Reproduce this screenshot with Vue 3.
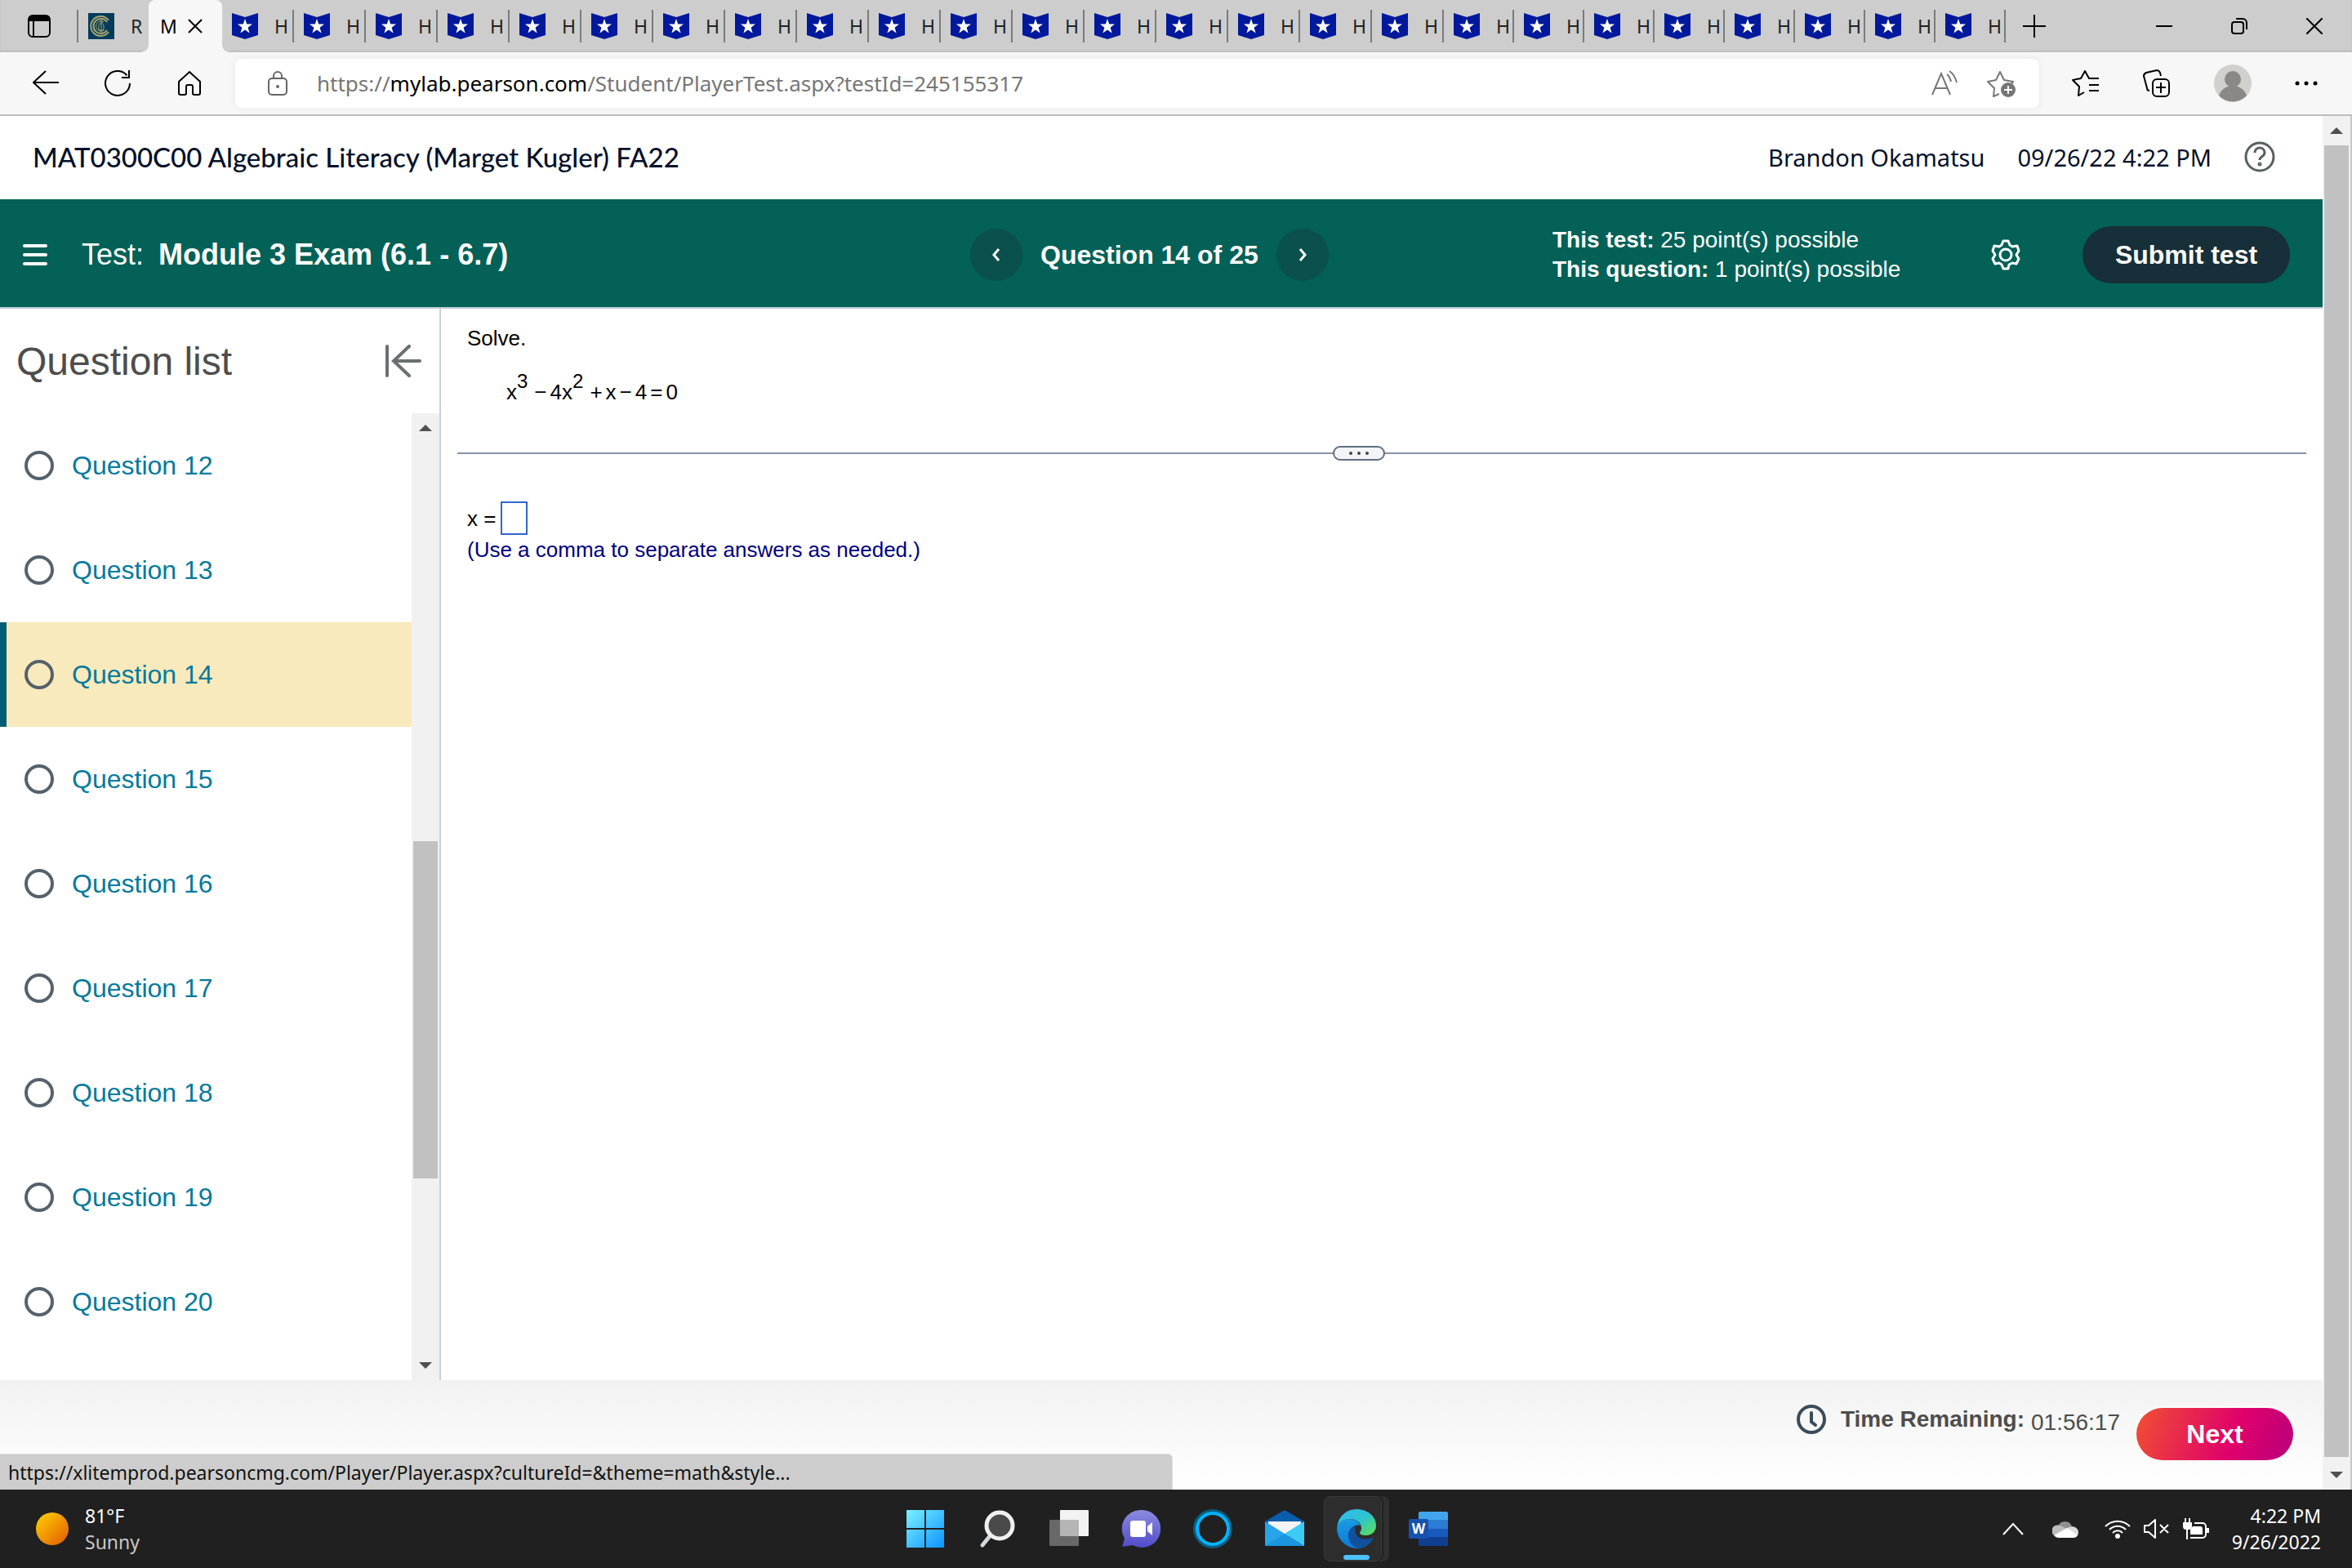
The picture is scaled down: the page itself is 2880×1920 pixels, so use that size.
<script setup>
import { ref } from "vue";

// 25 homework tabs, the last ones are squeezed a little by the browser
const homeworkTabs = Array.from({ length: 25 }, (_, i) => ({ id: i, narrow: i > 16 }));
const questions = [12, 13, 14, 15, 16, 17, 18, 19, 20];
const current = ref(14);
const answer = ref("");
const select = (n) => {
  current.value = n;
};
</script>

<template>
  <div class="screen">
    <!-- tab strip -->
    <div class="tabs">
      <button class="tab-menu" aria-label="Tab actions">
        <svg width="28" height="28" viewBox="0 0 28 28">
          <rect x="1" y="1" width="26" height="26" rx="5" fill="none" stroke="#000" stroke-width="2" />
          <path d="M1 8V5a4 4 0 0 1 4-4h18a4 4 0 0 1 4 4v3z" />
          <path d="M7 8v19" stroke="#000" stroke-width="2" />
        </svg>
      </button>
      <button class="tab tab-first">
        <svg width="32" height="32" viewBox="0 0 32 32">
          <rect width="32" height="32" fill="#003b5c" />
          <g fill="none" stroke="#a9a46a">
            <path d="M25 9a12 12 0 1 0 0 14" stroke-width="2" />
            <path d="M23 11a9 9 0 1 0 0 10" stroke-width="2" />
            <path d="M19 11a6 6 0 1 0 0 10M16 8v16M13 21v-6l3-4 3 4v6z" stroke-width="1" />
          </g>
        </svg>
        <span>R</span>
      </button>
      <div class="tab-active">
        <span>M</span>
        <button aria-label="Close tab">
          <svg width="18" height="18" viewBox="0 0 18 18">
            <path d="M1 1l16 16M17 1L1 17" stroke="#000" stroke-width="2" />
          </svg>
        </button>
      </div>
      <button v-for="t in homeworkTabs" :key="t.id" class="tab" :class="{ narrow: t.narrow }">
        <svg width="32" height="32" viewBox="0 0 32 32">
          <path d="M0 0l16 5L32 0v27l-16 5-16-5z" fill="#00189b" />
          <path d="M16 7l2.200 6.500h6.800l-5.400 4.200 2 6.800-5.600-4-5.600 4 2-6.800L7 13.500h6.800z" fill="#fff" />
        </svg>
        <span>H</span>
      </button>
      <button class="new-tab" aria-label="New tab">
        <svg width="28" height="28" viewBox="0 0 28 28">
          <path d="M14 0v28M0 14h28" stroke="#000" stroke-width="2" />
        </svg>
      </button>
      <div class="window-buttons">
        <button aria-label="Minimize">
          <svg width="20" height="20" viewBox="0 0 20 20"><path d="M0 10h20" stroke="#000" stroke-width="2" /></svg>
        </button>
        <button aria-label="Restore">
          <svg width="20" height="20" viewBox="0 0 20 20" fill="none" stroke="#000" stroke-width="2">
            <rect x="1" y="5" width="14" height="14" rx="3" />
            <path d="M6 1h8a5 5 0 0 1 5 5v8" />
          </svg>
        </button>
        <button aria-label="Close">
          <svg width="20" height="20" viewBox="0 0 20 20"><path d="M0 0l20 20M20 0L0 20" stroke="#000" stroke-width="2" /></svg>
        </button>
      </div>
    </div>

    <!-- address bar -->
    <div class="toolbar">
      <div class="nav-buttons">
        <button aria-label="Back">
          <svg width="32" height="32" viewBox="0 0 32 32" fill="none" stroke="#000" stroke-width="2">
            <path d="M32 15H1M16 1L1 15l15 14" />
          </svg>
        </button>
        <button aria-label="Refresh">
          <svg width="32" height="32" viewBox="0 0 32 32" fill="none" stroke="#000" stroke-width="2">
            <path d="M31 16a15 15 0 1 1-3.500-9.700M30 0v9h-9" />
          </svg>
        </button>
        <button aria-label="Home">
          <svg width="32" height="32" viewBox="0 0 32 32" fill="none" stroke="#000" stroke-width="2">
            <path d="M16 2l13 12v14a2 2 0 0 1-2 2h-5a2 2 0 0 1-2-2v-8a2 2 0 0 0-2-2h-4a2 2 0 0 0-2 2v8a2 2 0 0 1-2 2H5a2 2 0 0 1-2-2V14z" />
          </svg>
        </button>
      </div>
      <div class="address">
        <svg width="24" height="30" viewBox="0 0 24 30" fill="none" stroke="#666" stroke-width="2">
          <rect x="1" y="9" width="22" height="20" rx="4" />
          <path d="M7 9V6a5 5 0 0 1 10 0v3" />
          <circle cx="12" cy="19" r="1" fill="#666" />
        </svg>
        <div class="url">https://<b>mylab.pearson.com</b>/Student/PlayerTest.aspx?testId=245155317</div>
        <button aria-label="Read aloud">
          <svg width="32" height="32" viewBox="0 0 32 32" fill="none" stroke="#767676" stroke-width="2">
            <path d="M1 30L12 4l11 26M5 22h14M19 5c3 2 4 5 5 9M22 1c5 3 7 7 9 14" />
          </svg>
        </button>
        <button aria-label="Add to favorites">
          <svg width="36" height="34" viewBox="0 0 36 34">
            <path d="M15 30l-7 3 1-10-8-8 10-2 5-10 5 10 11 2-2 3" fill="none" stroke="#767676" stroke-width="2" stroke-linejoin="round" />
            <circle cx="26" cy="25" r="9" fill="#767676" />
            <path d="M26 20v10M21 25h10" stroke="#fff" stroke-width="2" />
          </svg>
        </button>
      </div>
      <div class="tool-buttons">
        <button aria-label="Favorites">
          <svg width="34" height="32" viewBox="0 0 34 32" fill="none" stroke="#000" stroke-width="2" stroke-linejoin="round">
            <path d="M15 27l-7 4 1-11-8-8 10-2 5-9 5 9h12M21 18h12M21 25h12" />
          </svg>
        </button>
        <button aria-label="Collections">
          <svg width="34" height="34" viewBox="0 0 34 34" fill="none" stroke="#000" stroke-width="2">
            <rect x="12" y="12" width="20" height="21" rx="5" />
            <path d="M22 16v13M16 22h12M8 26c-2 0-3-1-3-3L1 8c0-2 1-3 3-4l13-3c2 0 3 1 4 3l1 4" />
          </svg>
        </button>
        <button aria-label="Profile">
          <svg width="46" height="46" viewBox="0 0 46 46">
            <circle cx="23" cy="23" r="23" fill="#d2d0cc" />
            <circle cx="23" cy="18" r="10" fill="#8b8784" />
            <path d="M6 38a18 18 0 0 1 34 0 23 23 0 0 1-34 0z" fill="#8b8784" />
          </svg>
        </button>
        <button aria-label="Settings and more">
          <svg width="28" height="28" viewBox="0 0 28 28">
            <circle cx="3" cy="14" r="2.500" /><circle cx="14" cy="14" r="2.500" /><circle cx="25" cy="14" r="2.500" />
          </svg>
        </button>
      </div>
    </div>

    <div class="viewport">
      <div class="page">
        <header class="course">
          <h1>MAT0300C00 Algebraic Literacy (Marget Kugler) FA22</h1>
          <div class="user">
            <span>Brandon Okamatsu</span>
            <span>09/26/22 4:22 PM</span>
            <button aria-label="Help">
              <svg width="38" height="38" viewBox="0 0 38 38" fill="none" stroke="#56605f" stroke-width="3">
                <circle cx="19" cy="19" r="17" />
                <path d="M13 14c0-8 12-8 12 0 0 5-6 4-6 9" />
                <circle cx="19" cy="28" r="1" />
              </svg>
            </button>
          </div>
        </header>

        <div class="testbar">
          <div class="test-name">
            <button aria-label="Menu">
              <svg width="30" height="28" viewBox="0 0 30 28" stroke="#fff" stroke-width="4" stroke-linecap="round">
                <path d="M2 3h26M2 14h26M2 25h26" />
              </svg>
            </button>
            <span>Test:</span>
            <strong>Module 3 Exam (6.1 - 6.7)</strong>
          </div>
          <div class="stepper">
            <button class="round" aria-label="Previous question">
              <svg width="10" height="16" viewBox="0 0 10 16" fill="none" stroke="#fff" stroke-width="3"><path d="M8 1L2 8l6 7" /></svg>
            </button>
            <strong>Question 14 of 25</strong>
            <button class="round" aria-label="Next question">
              <svg width="10" height="16" viewBox="0 0 10 16" fill="none" stroke="#fff" stroke-width="3"><path d="M2 1l6 7-6 7" /></svg>
            </button>
          </div>
          <div class="test-info">
            <div class="points">
              <div><b>This test:</b> 25 point(s) possible</div>
              <div><b>This question:</b> 1 point(s) possible</div>
            </div>
            <button class="gear" aria-label="Settings">
              <svg width="36" height="38" viewBox="0 0 36 38" fill="none" stroke="#fff" stroke-width="3" stroke-linejoin="round">
                <path d="M15 2h6l2 5 3 2 6-1 2 6-3 5 3 5-3 6-5-1-4 2-1 5h-6l-2-5-3-2-5 1-3-6 3-5-3-5 2-6 6 1 3-2z" />
                <circle cx="18" cy="19" r="7" />
              </svg>
            </button>
            <button class="submit">Submit test</button>
          </div>
        </div>

        <div class="columns">
          <aside class="sidebar">
            <div class="sidebar-head">
              <h2>Question list</h2>
              <button aria-label="Collapse question list">
                <svg width="44" height="40" viewBox="0 0 44 40" fill="none" stroke="#6a7070" stroke-width="4" stroke-linecap="round">
                  <path d="M2 2v36M42 20H10M29 2L10 20l19 18" />
                </svg>
              </button>
            </div>
            <div class="sidebar-body">
              <nav class="question-list">
                <a
                  v-for="n in questions"
                  :key="n"
                  href="#"
                  :class="{ selected: n === current }"
                  @click.prevent="select(n)"
                >
                  <i class="dot"></i>Question {{ n }}
                </a>
              </nav>
              <div class="scrollbar list-scroll">
                <svg width="16" height="8" viewBox="0 0 16 8"><path d="M0 8l8-8 8 8z" fill="#505050" /></svg>
                <div class="thumb"></div>
                <svg width="16" height="8" viewBox="0 0 16 8"><path d="M0 0l8 8 8-8z" fill="#505050" /></svg>
              </div>
            </div>
          </aside>

          <main class="exercise">
            <p>Solve.</p>
            <p class="equation">x<sup>3</sup><span>−</span>4x<sup>2</sup><span>+</span>x<span>−</span>4<span>=</span>0</p>
            <div class="splitter">
              <button aria-label="Resize"><i></i><i></i><i></i></button>
            </div>
            <div class="answer">
              <label for="answer">x =</label>
              <input id="answer" v-model="answer" type="text" />
            </div>
            <p class="hint">(Use a comma to separate answers as needed.)</p>
          </main>
        </div>

        <footer class="actions">
          <svg width="36" height="36" viewBox="0 0 36 36" fill="none" stroke="#3b4b59" stroke-width="4" stroke-linecap="round">
            <circle cx="18" cy="18" r="16" />
            <path d="M18 10v11l5 4" />
          </svg>
          <strong>Time Remaining:</strong>
          <span class="timer">01:56:17</span>
          <button class="next">Next</button>
        </footer>
        <div class="status-bubble">https://xlitemprod.pearsoncmg.com/Player/Player.aspx?cultureId=&amp;theme=math&amp;style...</div>
      </div>
      <div class="scrollbar page-scroll">
        <svg width="16" height="8" viewBox="0 0 16 8"><path d="M0 8l8-8 8 8z" fill="#505050" /></svg>
        <div class="thumb"></div>
        <svg width="16" height="8" viewBox="0 0 16 8"><path d="M0 0l8 8 8-8z" fill="#505050" /></svg>
      </div>
    </div>

    <!-- windows taskbar -->
    <div class="taskbar">
      <button class="weather">
        <i class="sun"></i>
        <span>81°F<br /><small>Sunny</small></span>
      </button>
      <div class="apps">
        <button aria-label="Start">
          <svg width="48" height="48" viewBox="0 0 48 48">
            <defs>
              <linearGradient id="win" x1="0" y1="0" x2="48" y2="48" gradientUnits="userSpaceOnUse">
                <stop offset="0" stop-color="#7df3ff" /><stop offset="1" stop-color="#0a91ff" />
              </linearGradient>
            </defs>
            <path d="M1 1h22v22H1zM25 1h22v22H25zM1 25h22v22H1zM25 25h22v22H25z" fill="url(#win)" />
          </svg>
        </button>
        <button aria-label="Search">
          <svg width="48" height="48" viewBox="0 0 48 48">
            <path d="M15 33L6 44" stroke="#d3d9dc" stroke-width="5" stroke-linecap="round" />
            <circle cx="27" cy="20" r="16" fill="#4a4a4a" stroke="#eef1f2" stroke-width="5" />
          </svg>
        </button>
        <button aria-label="Task view">
          <svg width="48" height="48" viewBox="0 0 48 48">
            <rect x="13" y="1" width="35" height="32" rx="1" fill="#f2f2f2" />
            <rect x="0" y="13" width="36" height="32" rx="1" fill="#686868" />
            <rect x="13" y="13" width="23" height="20" fill="#b5b5b5" />
          </svg>
        </button>
        <button aria-label="Chat">
          <svg width="48" height="48" viewBox="0 0 48 48">
            <defs>
              <linearGradient id="chat" x1="0" y1="0" x2="0" y2="1">
                <stop offset="0" stop-color="#8c8be0" /><stop offset="1" stop-color="#514cc8" />
              </linearGradient>
            </defs>
            <path d="M24 1a23 23 0 1 1-10 43L1 46l3-10A23 23 0 0 1 24 1z" fill="url(#chat)" />
            <rect x="11" y="14" width="19" height="20" rx="3" fill="#fff" />
            <path d="M32 21l6-5v16l-6-5z" fill="#fff" />
          </svg>
        </button>
        <button aria-label="Cortana">
          <svg width="48" height="48" viewBox="0 0 48 48" fill="none">
            <circle cx="24" cy="24" r="22" stroke="#0c5c7c" stroke-width="4" />
            <circle cx="24" cy="24" r="19" stroke="#00b4ff" stroke-width="4" />
          </svg>
        </button>
        <button aria-label="Mail">
          <svg width="48" height="48" viewBox="0 0 48 48">
            <path d="M0 15L22 2a4 4 0 0 1 4 0l22 13v8H0z" fill="#0a5cad" />
            <path d="M4 15h40v9L24 36 4 24z" fill="#f3f3f3" />
            <path d="M0 15l48 30H1a1 1 0 0 1-1-1z" fill="#27a5e8" />
            <path d="M48 15L24 30l24 15z" fill="#3ccbf4" />
            <path d="M0 45l24-15 24 15z" fill="#1b95e0" />
          </svg>
        </button>
        <button class="running" aria-label="Microsoft Edge">
          <svg width="48" height="48" viewBox="0 0 48 48">
            <defs>
              <linearGradient id="edgeTop" x1="0" y1="0" x2="1" y2="1">
                <stop offset="0" stop-color="#36b8f2" /><stop offset="0.500" stop-color="#2cc4cf" /><stop offset="1" stop-color="#62e04e" />
              </linearGradient>
              <linearGradient id="edgeLow" x1="0" y1="0" x2="0" y2="1">
                <stop offset="0" stop-color="#1b9de2" /><stop offset="1" stop-color="#0a78d6" />
              </linearGradient>
            </defs>
            <path d="M0 22C2 9 11 0 24 0c14 0 24 9 24 20 0 8-6 12-12 12-5 0-8-1-8-3 0-1 2-2 2-6 0-7-7-11-14-11C9 12 2 16 0 22z" fill="url(#edgeTop)" />
            <path d="M0 23c1-7 8-11 15-11 6 0 12 3 14 8-6-2-14 2-14 12 0 8 6 15 15 16C13 50 0 38 0 23z" fill="url(#edgeLow)" />
            <path d="M23 20c-7 2-10 8-9 14 1 8 8 14 15 14 7-2 12-6 15-11 1-2 0-2-1-2-12 5-24-2-20-15z" fill="#11509c" />
          </svg>
        </button>
        <button aria-label="Word">
          <svg width="48" height="48" viewBox="0 0 48 48">
            <path d="M12 13V5a2 2 0 0 1 2-2h32a2 2 0 0 1 2 2v8z" fill="#41a5ee" />
            <path d="M12 13h36v11H12z" fill="#2b7cd3" />
            <path d="M12 24h36v10H12z" fill="#185abd" />
            <path d="M12 34h36v9a2 2 0 0 1-2 2H14a2 2 0 0 1-2-2z" fill="#103f91" />
            <rect x="0" y="12" width="24" height="24" rx="2" fill="#1651b0" />
            <text x="12" y="30" text-anchor="middle" font-size="17" font-weight="700" fill="#fff">W</text>
          </svg>
        </button>
      </div>
      <div class="tray">
        <button aria-label="Show hidden icons">
          <svg width="26" height="16" viewBox="0 0 26 16" fill="none" stroke="#fff" stroke-width="2"><path d="M1 15L13 2l12 13" /></svg>
        </button>
        <button class="cloud" aria-label="OneDrive">
          <svg width="32" height="22" viewBox="0 0 32 22">
            <path d="M7 8a9 9 0 0 1 17 0l-7 6z" fill="#8f8f8f" />
            <path d="M2 19A7 7 0 0 1 9 7l9 4-7 7z" fill="#bdbdbd" />
            <path d="M17 11c8-6 15-1 15 4 0 4-2 5-4 6z" fill="#dcdcdc" />
            <path d="M2 19l16-9 13 9a6 6 0 0 1-5 3H7a7 7 0 0 1-5-3z" fill="#fff" />
          </svg>
        </button>
        <button class="system" aria-label="Network, volume and battery">
          <svg width="32" height="24" viewBox="0 0 32 24" fill="none" stroke="#fff" stroke-width="2">
            <path d="M1 9a21 21 0 0 1 30 0M6 13a14 14 0 0 1 20 0M10 17a8 8 0 0 1 12 0" />
            <circle cx="16" cy="21" r="2" fill="#fff" />
          </svg>
          <svg width="32" height="24" viewBox="0 0 32 24" fill="none" stroke="#fff" stroke-width="2" stroke-linejoin="round">
            <path d="M1 8h5l8-7v22l-8-7H1zM20 7l10 10M30 7L20 17" />
          </svg>
          <svg width="32" height="26" viewBox="0 0 32 26" fill="none" stroke="#fff" stroke-width="2">
            <path d="M14 6h10a4 4 0 0 1 4 4v10a4 4 0 0 1-4 4H9" />
            <path d="M30 12v6" stroke-width="4" />
            <path d="M12 10h9a3 3 0 0 1 3 3v7H9v-6z" fill="#fff" stroke="none" />
            <path d="M3 0v5M8 0v5M5 12v14" />
            <path d="M0 5h11v5a4 4 0 0 1-4 4H4a4 4 0 0 1-4-4z" fill="#fff" stroke="none" />
          </svg>
        </button>
        <button class="clock">4:22 PM<br />9/26/2022</button>
      </div>
    </div>
  </div>
</template>

<style>
body {
  margin: 0;
}
</style>

<style scoped>
.screen {
  display: flex;
  flex-direction: column;
  height: 100vh;
  overflow: hidden;
  font-family: "Liberation Sans", Arial, sans-serif;
  background: #fff;
}
button {
  display: flex;
  align-items: center;
  justify-content: center;
  flex: none;
  padding: 0;
  border: none;
  background: none;
  font: inherit;
  color: inherit;
  cursor: pointer;
}
svg {
  display: block;
  flex: none;
}
h1, h2, p {
  margin: 0;
  font-weight: 400;
}

/* tab strip */
.tabs {
  display: flex;
  height: 64px;
  background: #cdcdcd;
  box-shadow: inset 0 -2px 2px #bebebe;
  font-family: "Noto Sans", "Open Sans", sans-serif;
  font-size: 23px;
}
.tab-menu {
  width: 96px;
  background: linear-gradient(#7b7b7b, #7b7b7b) right center / 2px 40px no-repeat;
}
.tab {
  width: 88px;
  box-sizing: border-box;
  justify-content: flex-start;
  padding-left: 12px;
  gap: 20px;
  background: linear-gradient(#7b7b7b, #7b7b7b) right center / 2px 40px no-repeat;
}
.tab.narrow {
  width: 86px;
}
.tab span {
  color: #222;
}
.tab-first {
  width: 86px;
  background: none;
}
.tab-active {
  position: relative;
  display: flex;
  align-items: center;
  width: 90px;
  box-sizing: border-box;
  padding-left: 14px;
  gap: 12px;
  background: #f7f7f7;
  border-radius: 8px 8px 0 0;
}
.tab-active span {
  width: 22px;
}
/* flared feet of the active tab */
.tab-active::before,
.tab-active::after {
  content: "";
  position: absolute;
  bottom: 0;
  width: 8px;
  height: 8px;
}
.tab-active::before {
  left: -8px;
  background: radial-gradient(circle at 0 0, #cdcdcd 7px, #f7f7f7 8px);
}
.tab-active::after {
  right: -8px;
  background: radial-gradient(circle at 100% 0, #cdcdcd 7px, #f7f7f7 8px);
}
.new-tab {
  width: 70px;
}
.window-buttons {
  display: flex;
  margin-left: auto;
}
.window-buttons button {
  width: 92px;
}

/* address bar */
.toolbar {
  display: flex;
  align-items: center;
  height: 76px;
  background: #f7f7f7;
  border-bottom: 2px solid #bdbdbd;
}
.nav-buttons {
  display: flex;
  gap: 56px;
  padding: 0 40px;
}
.address {
  display: flex;
  align-items: center;
  flex: 1;
  height: 60px;
  padding: 0 28px 0 40px;
  background: #fff;
  border-radius: 8px;
  box-shadow: 0 0 8px #e6e6e6;
  gap: 36px;
}
.url {
  flex: 1;
  font-family: "Noto Sans", "Open Sans", sans-serif;
  font-size: 26px;
  color: #767676;
}
.url b {
  font-weight: 400;
  color: #000;
}
.tool-buttons {
  display: flex;
  align-items: center;
  gap: 53px;
  padding: 0 42px 0 40px;
}

/* page area */
.viewport {
  display: flex;
  flex: 1;
  min-height: 0;
}
.page {
  position: relative;
  display: flex;
  flex-direction: column;
  flex: 1;
  min-width: 0;
}
.scrollbar {
  display: grid;
  justify-items: center;
  background: #f1f1f1;
}
.thumb {
  width: 30px;
  background: #c1c1c1;
}
.page-scroll {
  width: 34px;
  border-right: 2px solid #c7c7c7;
  grid-template-rows: 8px 1fr 8px;
  gap: 14px;
  padding: 14px 0;
}
.page-scroll .thumb {
  margin-bottom: 4px;
}
.course {
  display: flex;
  align-items: center;
  justify-content: space-between;
  height: 100px;
  padding: 0 58px 2px 40px;
  color: #05112a;
}
.course h1 {
  font-family: Lato, sans-serif;
  font-size: 33px;
  font-weight: 500;
}
.user {
  display: flex;
  align-items: center;
  gap: 40px;
  font-family: "Noto Sans", "Open Sans", sans-serif;
  font-size: 29px;
}
.testbar {
  display: grid;
  grid-template-columns: 1188fr 713fr 943fr;
  align-items: center;
  height: 128px;
  padding-top: 4px;
  background: #036157;
  border-bottom: 2px solid #c5cadb;
  color: #fff;
}
.test-name {
  display: flex;
  align-items: center;
  padding-left: 28px;
  font-size: 36px;
}
.test-name span {
  margin: 0 18px 0 42px;
}
.stepper {
  display: flex;
  align-items: center;
  gap: 22px;
  font-size: 32px;
}
.round {
  width: 64px;
  height: 64px;
  border-radius: 50%;
  background: #0a504c;
}
.test-info {
  display: flex;
  align-items: center;
  padding-right: 40px;
}
.points {
  flex: 1;
  font-size: 28px;
  line-height: 36px;
}
.gear {
  margin-right: 76px;
}
.submit {
  width: 254px;
  height: 70px;
  border-radius: 35px;
  background: #172f38;
  font-size: 32px;
  font-weight: 700;
}

.columns {
  display: flex;
  flex: 1;
  min-height: 0;
}
.sidebar {
  display: flex;
  flex-direction: column;
  width: 538px;
  border-right: 2px solid #c9cfdf;
}
.sidebar-head {
  display: flex;
  align-items: center;
  justify-content: space-between;
  flex: none;
  height: 128px;
  padding: 0 22px 0 20px;
}
.sidebar-head h2 {
  font-size: 48px;
  color: #4d4d4d;
}
.sidebar-body {
  display: flex;
  flex: 1;
  min-height: 0;
}
.question-list {
  flex: 1;
  overflow: hidden;
}
.question-list a {
  display: flex;
  align-items: center;
  height: 128px;
  padding-left: 22px;
  gap: 22px;
  border-left: 8px solid transparent;
  font-size: 32px;
  color: #047a9c;
  text-decoration: none;
}
.question-list a.selected {
  background: #f8eabc;
  border-left-color: #005d75;
}
.dot {
  width: 28px;
  height: 28px;
  border: 4px solid #55616b;
  border-radius: 50%;
}
.list-scroll {
  width: 34px;
  grid-template-rows: 8px 502fr 413fr 225fr 8px;
  padding: 14px 0;
}
.list-scroll .thumb {
  grid-row: 3;
}
.list-scroll svg:last-child {
  grid-row: 5;
}

.exercise {
  flex: 1;
  padding: 18px 20px 0;
  font-size: 26px;
  line-height: 36px;
  color: #000;
}
.exercise p {
  padding-left: 12px;
}
.exercise .equation {
  margin: 30px 0 48px;
  padding-left: 60px;
}
.equation span {
  margin: 0 4px;
}
sup {
  font-size: 24px;
  line-height: 0;
  vertical-align: 14px;
  margin-right: 4px;
}
.splitter {
  display: flex;
  align-items: center;
  justify-content: center;
  padding-right: 56px;
  background: linear-gradient(#8592a3, #8592a3) center / 100% 2px no-repeat;
}
.splitter button {
  width: 64px;
  height: 18px;
  box-sizing: border-box;
  border: 2px solid #5f6f80;
  border-radius: 9px;
  background: #f3f4f8;
  gap: 6px;
}
.splitter i {
  width: 4px;
  height: 4px;
  border-radius: 50%;
  background: #444;
}
.answer {
  display: flex;
  align-items: center;
  gap: 6px;
  margin-top: 50px;
  padding-left: 12px;
}
.answer input {
  width: 33px;
  height: 41px;
  box-sizing: border-box;
  padding: 0 4px;
  border: 2px solid #2f67cf;
  font: inherit;
  outline: none;
}
.hint {
  color: #000080;
}

.actions {
  display: flex;
  align-items: flex-start;
  justify-content: flex-end;
  flex: none;
  height: 134px;
  box-sizing: border-box;
  padding: 30px 36px 0 0;
  background: linear-gradient(#f2f2f2, #fff);
  color: #4d4d4d;
  font-size: 28px;
  line-height: 36px;
}
.actions strong {
  margin: 0 8px 0 18px;
}
.timer {
  margin-top: 4px;
}
.next {
  width: 192px;
  height: 64px;
  margin: 4px 0 0 20px;
  border-radius: 32px;
  background: linear-gradient(110deg, #f05030, #e0006c 62%, #b8007a);
  box-shadow: 0 0 0 3px #fafafa;
  color: #fff;
  font-size: 32px;
  font-weight: 700;
}
.status-bubble {
  position: absolute;
  left: 0;
  bottom: 0;
  width: 50.5%;
  height: 44px;
  box-sizing: border-box;
  padding-left: 10px;
  border: solid #dcdcdc;
  border-width: 1px 1px 0 0;
  border-radius: 0 6px 0 0;
  background: #cdcdcd;
  font-family: "Noto Sans", "Open Sans", sans-serif;
  font-size: 23px;
  line-height: 44px;
  color: #111;
}

/* taskbar */
.taskbar {
  display: grid;
  grid-template-columns: 1fr auto 1fr;
  align-items: center;
  height: 96px;
  background: #202020;
  color: #fff;
  font-family: "Noto Sans", "Open Sans", sans-serif;
  font-size: 23px;
  line-height: 32px;
}
.weather {
  justify-self: start;
  gap: 20px;
  padding-left: 44px;
  text-align: left;
}
.weather small {
  font-size: 23px;
  color: #c8c8c8;
}
.sun {
  width: 40px;
  height: 40px;
  border-radius: 50%;
  background: linear-gradient(135deg, #ffd400, #f09000 55%, #e05a00);
}
.apps {
  display: flex;
  gap: 8px;
  padding-left: 2px;
}
.apps button {
  width: 80px;
  height: 80px;
}
/* two stacked cards: more than one window is open */
.apps .running {
  position: relative;
  border-radius: 8px;
  background: #303030;
}
.running::before {
  content: "";
  position: absolute;
  inset: 0 9px 0 0;
  border: 1px solid #3a3a3a;
  border-radius: 8px;
  background: #2d2d2d;
  box-shadow: 2px 0 0 #202020;
}
.running svg {
  position: relative;
}
.running::after {
  content: "";
  position: absolute;
  bottom: 2px;
  left: 24px;
  width: 32px;
  height: 6px;
  border-radius: 3px;
  background: #4cc2ff;
}
.apps text {
  font-family: "Open Sans", sans-serif;
}
.tray {
  display: flex;
  align-items: center;
  justify-self: end;
  padding-right: 38px;
}
.cloud {
  margin: 0 32px 0 35px;
}
.system {
  gap: 16px;
}
.clock {
  margin-left: 28px;
  text-align: right;
}
</style>
